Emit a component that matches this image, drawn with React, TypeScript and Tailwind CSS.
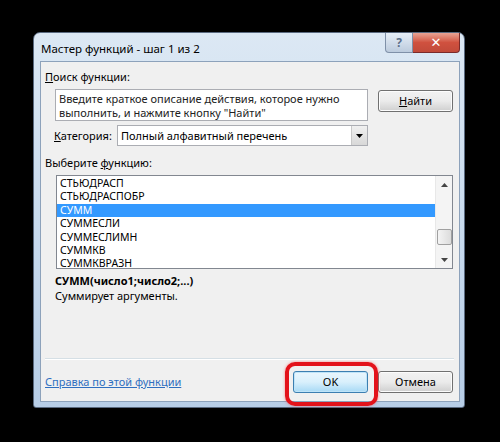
import React from "react";

const items = [
  "СТЬЮДРАСП",
  "СТЬЮДРАСПОБР",
  "СУММ",
  "СУММЕСЛИ",
  "СУММЕСЛИМН",
  "СУММКВ",
  "СУММКВРАЗН",
];

function Btn({ children, def }: { children: React.ReactNode; def?: boolean }) {
  return (
    <div
      className={
        "w-[75px] h-[22px] rounded-[3px] border flex items-center justify-center text-[11px] text-black " +
        (def
          ? "border-[#3c7fb1] bg-gradient-to-b from-[#eaf6fd] via-[#d9f0fc] to-[#a7d9f5] shadow-[inset_0_0_0_1px_#bfe4f8]"
          : "border-[#707070] bg-gradient-to-b from-[#f2f2f2] via-[#ebebeb] to-[#cfcfcf] shadow-[inset_0_0_0_1px_#fcfcfc]")
      }
    >
      {children}
    </div>
  );
}

export default function App() {
  return (
    <div
      className="relative w-[500px] h-[442px] bg-black pt-[32px] pl-[33px] overflow-hidden"
      style={{ fontFamily: '"Noto Sans", "DejaVu Sans", sans-serif' }}
    >
      <div className="w-[432px] h-[376px] rounded-t-[7px] rounded-b-[3px] border border-[#5a6a80] bg-gradient-to-b from-[#dce8f4] via-[#c9dbee] to-[#b7cde6] flex flex-col">
        {/* title bar */}
        <div className="h-[28px] flex items-start">
          <div className="pl-[7px] pt-[9px] text-[11.5px] leading-[14px] text-black">Мастер функций - шаг 1 из 2</div>
          <div className="ml-auto mr-[4px] flex">
            <div className="w-[28px] h-[20px] rounded-bl-[4px] border border-t-0 border-[#7f90a8] bg-gradient-to-b from-[#e6eef7] to-[#bccbdd] flex items-center justify-center text-[12px] font-bold text-[#5b6f8a]">
              ?
            </div>
            <div className="w-[47px] h-[20px] rounded-br-[4px] border border-t-0 border-l-0 border-[#7a2a2a] bg-gradient-to-b from-[#e8a394] via-[#d0513f] to-[#c14a3a] flex items-center justify-center text-[13px] font-bold text-white">
              ✕
            </div>
          </div>
        </div>
        {/* client */}
        <div className="ml-[6px] mr-[4px] h-[341px] bg-[#f0f0f0] border border-[#8da2bb] flex flex-col text-[11px] leading-[14px] text-black">
          <div className="mt-[8px] ml-[4px]">
            <span className="underline">П</span>оиск функции:
          </div>
          <div className="mt-[5px] ml-[14px] flex items-start">
            <div className="w-[313px] h-[32px] bg-white border border-[#abadb3] px-[3px] pt-[2px] text-[#222] leading-[14px]">
              Введите краткое описание действия, которое нужно выполнить, и нажмите кнопку "Найти"
            </div>
            <div className="ml-[10px] mt-[1px]">
              <Btn>
                <span><span className="underline">Н</span>айти</span>
              </Btn>
            </div>
          </div>
          <div className="mt-[4px] ml-[13px] flex items-center">
            <div className="w-[63px]">
              <span className="underline">К</span>атегория:
            </div>
            <div className="w-[251px] h-[21px] bg-white border border-[#abadb3] flex items-center">
              <div className="pl-[3px] flex-1">Полный алфавитный перечень</div>
              <div className="w-[16px] h-[19px] bg-gradient-to-b from-[#f0f0f0] to-[#d8d8d8] border-l border-[#c8c8c8] flex items-center justify-center">
                <svg width="7" height="4" viewBox="0 0 7 4">
                  <path d="M0 0h7L3.5 4z" fill="#000" />
                </svg>
              </div>
            </div>
          </div>
          <div className="mt-[10px] ml-[4px]">
            Выберите <span className="underline">ф</span>ункцию:
          </div>
          <div className="mt-[5px] ml-[15px] w-[397px] h-[94px] bg-white border border-[#828790] flex">
            <div className="flex-1 pt-[1px]">
              {items.map((it) => (
                <div
                  key={it}
                  className={
                    "h-[13.4px] leading-[13.4px] pl-[3px] text-[10.5px] " +
                    (it === "СУММ" ? "bg-[#3399ff] text-white" : "text-black")
                  }
                >
                  {it}
                </div>
              ))}
            </div>
            <div className="w-[17px] bg-[#f4f4f4] border-l border-[#e8e8e8] flex flex-col items-center">
              <div className="h-[17px] flex items-center justify-center">
                <svg width="7" height="4" viewBox="0 0 7 4">
                  <path d="M3.5 0L7 4H0z" fill="#444" />
                </svg>
              </div>
              <div className="mt-[36px] w-[15px] h-[16px] rounded-[2px] border border-[#a0a0a0] bg-gradient-to-r from-[#f4f4f4] to-[#dcdcdc]" />
              <div className="mt-auto h-[17px] flex items-center justify-center">
                <svg width="7" height="4" viewBox="0 0 7 4">
                  <path d="M0 0h7L3.5 4z" fill="#444" />
                </svg>
              </div>
            </div>
          </div>
          <div className="mt-[5px] ml-[14px] font-bold">СУММ(число1;число2;...)</div>
          <div className="mt-[1px] ml-[14px]">Суммирует аргументы.</div>
          <div className="mt-[55px] ml-[4px] mr-[5px] h-[2px] border-t border-[#d5dfe5] border-b border-b-white" />
          <div className="mt-[11px] ml-[4px] mr-[6px] flex items-center">
            <div className="text-[#2f6fc0] underline">Справка по этой функции</div>
            <div className="ml-auto flex gap-[10px]">
              <Btn def>OK</Btn>
              <Btn>Отмена</Btn>
            </div>
          </div>
        </div>
      </div>
      {/* red highlight */}
      <div className="absolute left-[285px] top-[362px] w-[93px] h-[44px] rounded-[10px] border-[4px] border-[#e3121a] shadow-[0_0_3px_rgba(255,60,60,0.6)]" />
    </div>
  );
}
